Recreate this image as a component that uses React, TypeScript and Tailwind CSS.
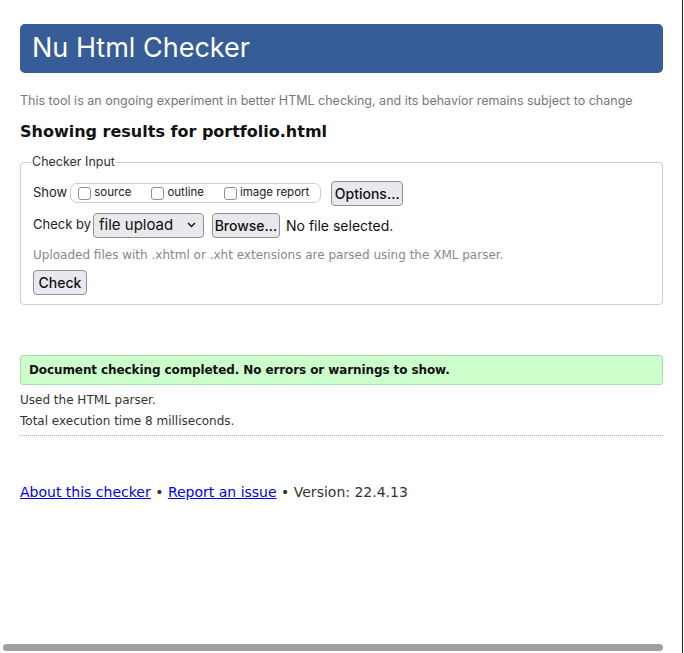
const poppins = { fontFamily: 'Inter, "Noto Sans", sans-serif' };

const Checkbox = ({ label }: { label: string }) => (
  <label className="flex items-center gap-[3px]">
    <span className="w-[13px] h-[13px] rounded-[3px] border border-[#8f8f9d] bg-white" />
    <span className="text-[11.5px] text-[#222]">{label}</span>
  </label>
);

const Button = ({ children, className = '' }: { children: React.ReactNode; className?: string }) => (
  <button
    type="button"
    className={`h-[25px] px-[5px] rounded-[4px] border border-[#8f8f9d] bg-[#e9e9ed] text-[14px] font-medium text-[#111] flex items-center ${className}`}
  >
    {children}
  </button>
);

export default function App() {
  return (
    <div
      className="relative h-[653px] w-[684px] overflow-hidden bg-white text-[#222]"
      style={{ fontFamily: '"DejaVu Sans", sans-serif' }}
    >
      <div className="ml-5 w-[643px]">
        <header
          className="mt-6 h-[49px] rounded-[5px] bg-[#365d98] px-3 flex items-center text-white text-[27px]"
          style={poppins}
        >
          Nu Html Checker
        </header>

        <p className="mt-[19px] text-[12.5px] text-[#777]" style={poppins}>
          This tool is an ongoing experiment in better HTML checking, and its behavior remains subject to change
        </p>

        <h2 className="mt-[9px] text-[16px] font-bold text-[#111]">Showing results for portfolio.html</h2>

        <fieldset className="mt-[9px] border border-[#ccc] rounded-[4px] px-3 pt-[8px] pb-[9px]">
          <legend className="px-[1px] -ml-[2px] text-[12.5px] text-[#333]" style={poppins}>
            Checker Input
          </legend>

          <div className="flex items-center h-[25px] mt-px" style={poppins}>
            <span className="text-[13px] mr-[3px]">Show</span>
            <div className="flex items-center h-[20px] w-[251px] rounded-[7px] border border-[#ccc] pl-[7px] gap-[20px]">
              <Checkbox label="source" />
              <Checkbox label="outline" />
              <Checkbox label="image report" />
            </div>
            <Button className="ml-[10px] w-[72px] justify-center">Options…</Button>
          </div>

          <div className="flex items-center h-[25px] mt-[7px]" style={poppins}>
            <span className="text-[13px] mr-[2px]">Check by</span>
            <div className="h-[25px] w-[111px] rounded-[4px] border border-[#8f8f9d] bg-[#e9e9ed] flex items-center justify-between pl-[5px] pr-[7px] text-[15px] text-[#111]">
              file upload
              <svg width="9" height="6" viewBox="0 0 9 6" fill="none" stroke="#111" strokeWidth="1.4">
                <path d="M1 1l3.5 3.5L8 1" />
              </svg>
            </div>
            <Button className="ml-[8px] w-[68px] justify-center">Browse…</Button>
            <span className="ml-[6px] text-[14px] text-[#111]">No file selected.</span>
          </div>

          <p className="mt-[8px] text-[12px] text-[#888]">
            Uploaded files with .xhtml or .xht extensions are parsed using the XML parser.
          </p>

          <div className="mt-[6px]" style={poppins}>
            <Button className="w-[54px] justify-center">Check</Button>
          </div>
        </fieldset>

        <div className="mt-[50px] h-[30px] rounded-[3px] border border-[#aaddaa] bg-[#ccffcc] px-2 flex items-center text-[12px] font-bold tracking-[-0.1px] text-[#111]">
          Document checking completed. No errors or warnings to show.
        </div>

        <p className="mt-[5px] text-[12px] text-[#333] leading-[21px]">Used the HTML parser.</p>
        <p className="text-[12px] text-[#333] leading-[21px]">Total execution time 8 milliseconds.</p>
        <div className="mt-[3px] border-b border-dotted border-[#aaa]" />

        <p className="mt-[46px] text-[14px] text-[#333]">
          <a href="#" className="text-[#00e] underline">About this checker</a>
          {' • '}
          <a href="#" className="text-[#00e] underline">Report an issue</a>
          {' • Version: 22.4.13'}
        </p>
      </div>

      <div className="absolute left-[3px] top-[644px] h-[7px] w-[660px] rounded-full bg-[#a0a0a0]" />
      <div className="absolute right-[1px] top-0 h-full w-px bg-[#222]" />
    </div>
  );
}
